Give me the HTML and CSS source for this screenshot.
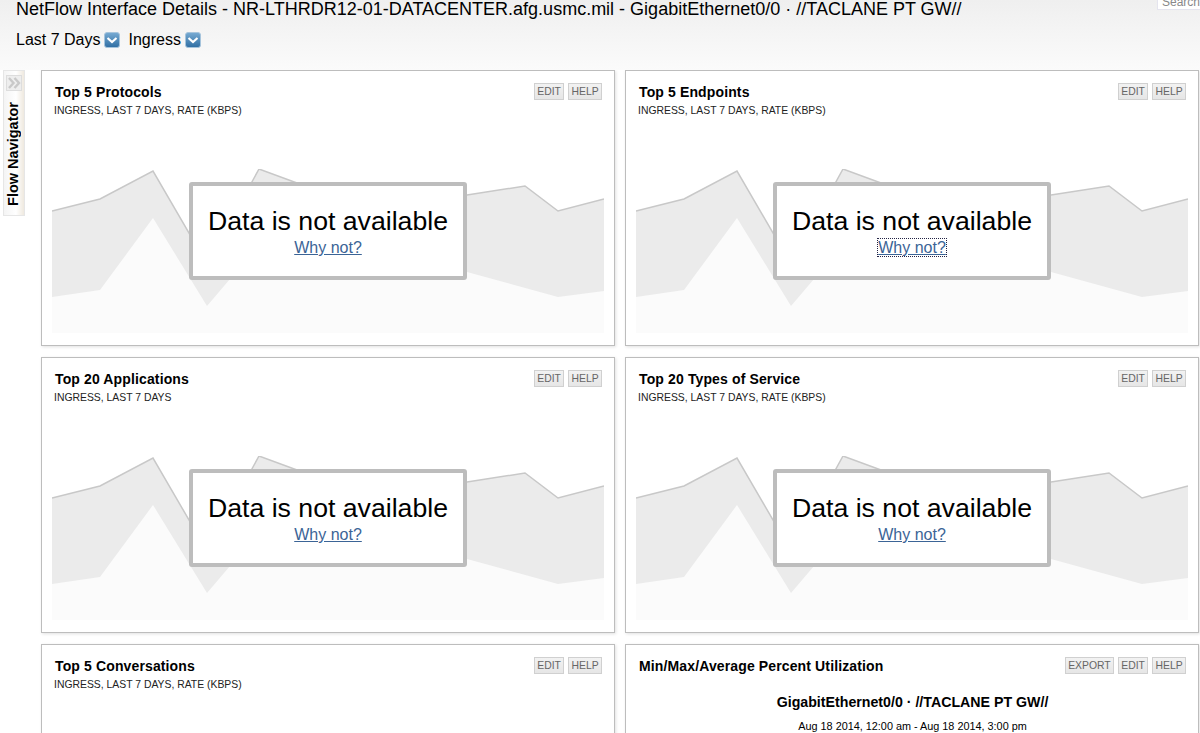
FILE: index.html
```html
<!DOCTYPE html>
<html lang="en">
<head>
<meta charset="utf-8">
<title>NetFlow Interface Details</title>
<link rel="stylesheet" href="styles.css">
</head>
<body>
<svg class="defs" width="0" height="0" aria-hidden="true">
  <defs>
    <linearGradient id="ddfill" x1="0" y1="0" x2="0" y2="1">
      <stop offset="0" stop-color="#78abd3"/>
      <stop offset="1" stop-color="#2f6ea3"/>
    </linearGradient>
    <symbol id="dd" viewBox="0 0 16 16">
      <rect x="0.5" y="0.5" width="15" height="15" rx="2.5" fill="url(#ddfill)" stroke="#a6c4dc"/>
      <path d="M3.5 6 L8 10 L12.5 6" fill="none" stroke="#fff" stroke-width="2.2"/>
    </symbol>
    <symbol id="bg" viewBox="0 0 552 164">
      <polygon points="0,42 48,30 101,2 155,95 207,0 245,14 300,35 415,26 473,17 506,42 552,30 552,164 0,164" fill="#ebebeb"/>
      <polyline points="0,42 48,30 101,2 155,95 207,0 245,14 300,35 415,26 473,17 506,42 552,30" fill="none" stroke="#c8c8c8" stroke-width="1.5"/>
      <polygon points="0,128 48,121 101,49 155,137 207,76 415,103 506,128 552,122 552,164 0,164" fill="#fbfbfb"/>
    </symbol>
  </defs>
</svg>
<header class="page-head">
  <h1 class="page-title">NetFlow Interface Details - NR-LTHRDR12-01-DATACENTER.afg.usmc.mil - GigabitEthernet0/0 · //TACLANE PT GW//</h1>
  <div class="filters">
    <span class="filter">Last 7 Days <svg class="dd"><use href="#dd"/></svg></span>
    <span class="filter">Ingress <svg class="dd"><use href="#dd"/></svg></span>
  </div>
  <div class="search">Search</div>
</header>
<div class="layout">
  <aside class="nav-tab">
    <span class="nav-toggle"><svg class="nav-icon" viewBox="0 0 14 14"><path d="M2 2 L6.5 7 L2 12 M7.5 2 L12 7 L7.5 12" fill="none" stroke="#c9c9c9" stroke-width="2.4"/></svg></span>
    <span class="nav-label">Flow Navigator</span>
  </aside>
  <main class="grid">
    <section class="panel">
      <div class="panel-head"><h2>Top 5 Protocols</h2><div class="btns"><span class="btn">EDIT</span><span class="btn">HELP</span></div></div>
      <p class="sub">INGRESS, LAST 7 DAYS, RATE (KBPS)</p>
      <div class="chart"><svg class="bg"><use href="#bg"/></svg><div class="na"><div class="na-msg">Data is not available</div><a class="why" href="#">Why not?</a></div></div>
    </section>
    <section class="panel">
      <div class="panel-head"><h2>Top 5 Endpoints</h2><div class="btns"><span class="btn">EDIT</span><span class="btn">HELP</span></div></div>
      <p class="sub">INGRESS, LAST 7 DAYS, RATE (KBPS)</p>
      <div class="chart"><svg class="bg"><use href="#bg"/></svg><div class="na"><div class="na-msg">Data is not available</div><a class="why focus" href="#">Why not?</a></div></div>
    </section>
    <section class="panel">
      <div class="panel-head"><h2>Top 20 Applications</h2><div class="btns"><span class="btn">EDIT</span><span class="btn">HELP</span></div></div>
      <p class="sub">INGRESS, LAST 7 DAYS</p>
      <div class="chart"><svg class="bg"><use href="#bg"/></svg><div class="na"><div class="na-msg">Data is not available</div><a class="why" href="#">Why not?</a></div></div>
    </section>
    <section class="panel">
      <div class="panel-head"><h2>Top 20 Types of Service</h2><div class="btns"><span class="btn">EDIT</span><span class="btn">HELP</span></div></div>
      <p class="sub">INGRESS, LAST 7 DAYS, RATE (KBPS)</p>
      <div class="chart"><svg class="bg"><use href="#bg"/></svg><div class="na"><div class="na-msg">Data is not available</div><a class="why" href="#">Why not?</a></div></div>
    </section>
    <section class="panel">
      <div class="panel-head"><h2>Top 5 Conversations</h2><div class="btns"><span class="btn">EDIT</span><span class="btn">HELP</span></div></div>
      <p class="sub">INGRESS, LAST 7 DAYS, RATE (KBPS)</p>
    </section>
    <section class="panel">
      <div class="panel-head"><h2>Min/Max/Average Percent Utilization</h2><div class="btns"><span class="btn">EXPORT</span><span class="btn">EDIT</span><span class="btn">HELP</span></div></div>
      <div class="util-title">GigabitEthernet0/0 · //TACLANE PT GW//</div>
      <div class="util-range">Aug 18 2014, 12:00 am - Aug 18 2014, 3:00 pm</div>
    </section>
  </main>
</div>
</body>
</html>
```
FILE: styles.css
```css
* { box-sizing: border-box; }
html, body { height: 733px; overflow: hidden; }
body {
  margin: 0;
  font-family: "Liberation Sans", Arial, sans-serif;
  color: #000;
  background: #fff;
}
.defs { position: absolute; }
.page-head {
  position: relative;
  height: 70px;
  padding: 0 16px;
  background: linear-gradient(#efefef, #fbfbfb);
}
.page-title {
  margin: 0;
  font-size: 18px;
  font-weight: normal;
  line-height: 18px;
  white-space: nowrap;
}
.filters {
  display: flex;
  gap: 8px;
  margin-top: 13px;
  font-size: 16px;
  line-height: 18px;
}
.filter { display: flex; align-items: center; gap: 4px; }
.dd { width: 16px; height: 16px; }
.search {
  position: absolute;
  top: -9px;
  right: 0;
  width: 43px;
  height: 19px;
  padding: 3px 0 0 4px;
  background: #fff;
  border: 1px solid #e4e4ee;
  border-right: 0;
  font-size: 12px;
  color: #888;
}
.layout {
  display: flex;
  align-items: flex-start;
  padding-left: 3px;
}
.nav-tab {
  display: flex;
  flex-direction: column;
  align-items: center;
  width: 22px;
  height: 146px;
  margin-right: 16px;
  padding: 4px 1px 0 0;
  background: linear-gradient(90deg, #f4f4f4, #fff 60%, #efe9df);
  border: 1px solid #e6e6e6;
}
.nav-toggle {
  display: block;
  width: 16px;
  height: 16px;
  padding: 0;
  border: 1px solid #ddd;
  background: #eee;
}
.nav-icon { display: block; width: 14px; height: 14px; }
.nav-label {
  margin: 11px 2px 0 0;
  writing-mode: vertical-rl;
  transform: rotate(180deg);
  font-size: 14.5px;
  font-weight: bold;
  line-height: 14px;
  white-space: nowrap;
}
.grid {
  display: grid;
  grid-template-columns: 574px 574px;
  grid-auto-rows: 276px;
  gap: 11px 10px;
}
.panel {
  padding: 11px 12px 0 13px;
  background: #fff;
  border: 1px solid #bdbdbd;
  box-shadow: 1px 1px 3px rgba(0, 0, 0, .12);
}
.panel-head {
  display: flex;
  justify-content: space-between;
  align-items: flex-start;
}
.panel-head h2 {
  margin: 0;
  font-size: 14px;
  line-height: 20px;
  letter-spacing: .13px;
}
.btns { display: flex; gap: 4px; margin-top: 1px; }
.btn {
  height: 17px;
  padding: 0 2.3px;
  border: 1px solid #d0d0d0;
  background: linear-gradient(#f2f2f2, #e6e6e6);
  font-size: 10.4px;
  line-height: 15px;
  color: #666;
}
.sub {
  margin: 2px 0 0 -1px;
  font-size: 10.4px;
  line-height: 14px;
  color: #222;
}
.chart {
  position: relative;
  width: 552px;
  height: 164px;
  margin: 51px 0 0 -3px;
}
.bg { display: block; width: 552px; height: 164px; }
.na {
  position: absolute;
  left: 137px;
  top: 13px;
  width: 278px;
  height: 98px;
  padding-top: 19px;
  text-align: center;
  background: #fff;
  border: 4px solid #bdbdbd;
  border-radius: 3px;
}
.na-msg { margin-bottom: 1px; font-size: 26.67px; line-height: 33px; }
.why { font-size: 16px; line-height: 18px; color: #3b6496; }
.why.focus { outline: 1px dotted #224; }
.util-title {
  margin-top: 18px;
  text-align: center;
  font-size: 14.2px;
  font-weight: bold;
}
.util-range {
  margin-top: 10px;
  text-align: center;
  font-size: 10.85px;
}
```
